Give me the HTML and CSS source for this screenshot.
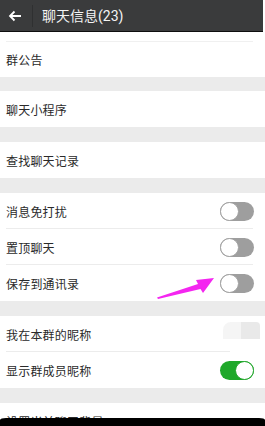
FILE: index.html
```html
<!DOCTYPE html>
<html lang="zh-CN">
<head>
<meta charset="utf-8">
<title>聊天信息</title>
<link rel="stylesheet" href="styles.css">
</head>
<body>
<div class="screen">
  <header class="bar">
    <svg class="back" width="14" height="12" viewBox="0 0 14 12"><path d="M13 6H2M6.5 1.5L2 6l4.5 4.5" fill="none" stroke="#fff" stroke-width="1.8"/></svg>
    <span class="vsep"></span>
    <span class="title">聊天信息(23)</span>
  </header>
  <section class="group first">
    <div class="row">群公告</div>
  </section>
  <div class="gap g14"></div>
  <section class="group">
    <div class="row">聊天小程序</div>
  </section>
  <div class="gap"></div>
  <section class="group">
    <div class="row">查找聊天记录</div>
  </section>
  <div class="gap"></div>
  <section class="group">
    <div class="row line"><span>消息免打扰</span><span class="sw"></span></div>
    <div class="row line"><span>置顶聊天</span><span class="sw"></span></div>
    <div class="row"><span>保存到通讯录</span><span class="sw"></span></div>
  </section>
  <div class="gap"></div>
  <section class="group">
    <div class="row line short"><span>我在本群的昵称</span><span class="ghost"></span></div>
    <div class="row"><span>显示群成员昵称</span><span class="sw on"></span></div>
  </section>
  <div class="gap"></div>
  <section class="group">
    <div class="row">设置当前聊天背景</div>
  </section>
  <svg class="pointer" width="62" height="32" viewBox="0 0 62 32"><path d="M2 27.5L43 14L41 10L59 8L48 23L45.5 19L3 29Z" fill="#f425f0"/></svg>
  <div class="bezel"></div>
</div>
</body>
</html>
```
FILE: styles.css
```css
html, body {
  margin: 0;
  padding: 0;
  background: #fff;
}
body {
  font-family: "Noto Sans CJK SC", "Noto Sans", sans-serif;
  color: #2a2a2a;
}
.screen {
  position: relative;
  width: 265px;
  height: 426px;
  overflow: hidden;
  background: #fff;
}
.bar {
  height: 31px;
  width: 263px;
  background: #3a3b3c;
  border-bottom: 1px solid #0e0e0e;
  display: flex;
  align-items: center;
  color: #fff;
}
.back {
  margin-left: 8px;
}
.vsep {
  width: 1px;
  height: 22px;
  background: #2f3031;
  margin-left: 10px;
}
.title {
  margin-left: 9px;
  font-size: 14px;
  font-family: "Roboto", "Noto Sans CJK SC", sans-serif;
  line-height: 1;
  color: #f4f4f4;
}
.group {
  background: #fff;
}
.group.first {
  padding-top: 9px;
}
.group.first .row {
  border-top: 1px solid #f0f0f0;
  height: 36px;
  margin: 0 12px 0 6px;
  padding-left: 0;
}
.gap {
  height: 15px;
  background: #ebebeb;
}
.gap.g14 {
  height: 14px;
}
.row {
  position: relative;
  height: 36px;
  display: flex;
  align-items: center;
  justify-content: space-between;
  padding: 0 11px 0 6px;
  font-size: 12px;
  letter-spacing: 0.2px;
  box-sizing: border-box;
}
.row.line::after {
  content: "";
  position: absolute;
  left: 6px;
  right: 12px;
  bottom: 0;
  height: 1px;
  background: #ececec;
}
.row.short::after {
  right: 35px;
}
.sw {
  position: relative;
  width: 34px;
  height: 19px;
  border-radius: 10px;
  background: #9e9e9e;
  box-sizing: border-box;
}
.sw::before {
  content: "";
  position: absolute;
  left: 0;
  top: 0;
  width: 19px;
  height: 19px;
  border-radius: 50%;
  background: #fff;
  border: 1px solid #a2a2a2;
  box-sizing: border-box;
}
.sw.on {
  background: #1fa82a;
}
.sw.on::before {
  left: auto;
  right: 0;
  border-color: #22a62c;
}
.ghost {
  width: 37px;
  height: 17px;
  margin-right: -6px;
  margin-top: -8px;
  border-radius: 8px 4px 0 0;
  background: linear-gradient(90deg, #f5f5f5 0, #f5f5f5 50%, #e9e9e9 50%, #e9e9e9 100%);
}
.pointer {
  position: absolute;
  left: 155px;
  top: 270px;
}
.bezel {
  position: absolute;
  left: 0;
  right: 0;
  bottom: 0;
  height: 8px;
  background: #000;
  border-radius: 6px 6px 0 0 / 2px 2px 0 0;
}
```
